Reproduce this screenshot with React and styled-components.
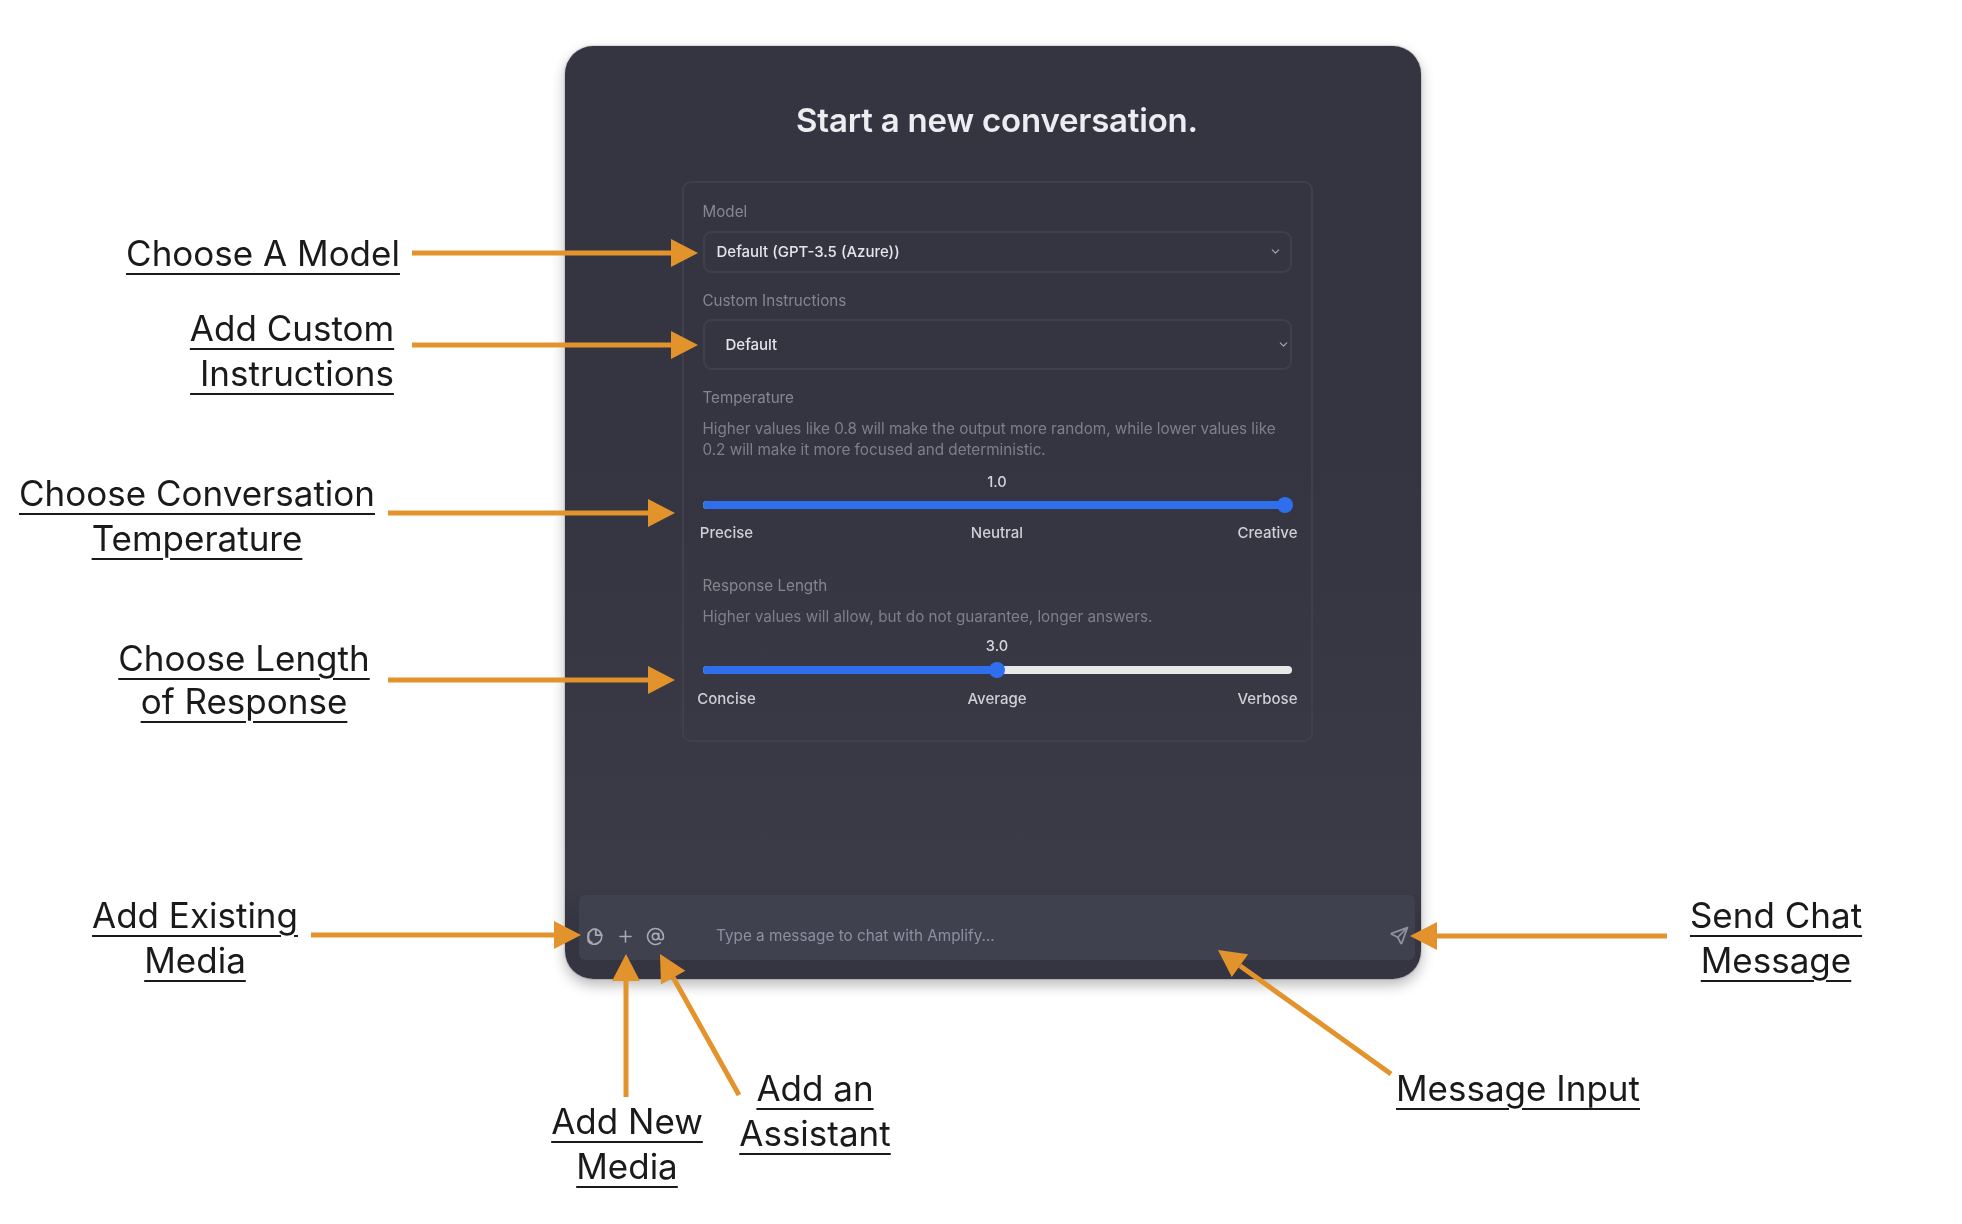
import React from "react"
import styled, { createGlobalStyle } from "styled-components"
import { Plus, AtSign, ChevronDown } from "lucide-react"
import { TbSend } from "react-icons/tb"

const GlobalStyle = createGlobalStyle`
  html, body {
    margin: 0;
    padding: 0;
    background: #fff;
  }
`

const Page = styled.div`
  position: relative;
  width: 1962px;
  height: 1224px;
  padding: 46px 0 0 565px;
  box-sizing: border-box;
  overflow: hidden;
  background: #fff;
  font-family: "Inter", sans-serif;
`

const ChatWindow = styled.div`
  display: flex;
  flex-direction: column;
  align-items: center;
  width: 856px;
  height: 933px;
  box-sizing: border-box;
  padding: 55px 6px 19px 14px;
  border-radius: 28px;
  background: linear-gradient(180deg, #343541 0%, #343541 45%, #3a3b47 90%, #343541 94%);
  box-shadow: 0 6px 14px rgba(0, 0, 0, 0.28), 0 0 2px rgba(0, 0, 0, 0.4);
  filter: blur(0.7px);
`

const Title = styled.h1`
  margin: 0 0 42px;
  font-size: 33px;
  line-height: 38px;
  font-weight: 600;
  color: #ececf1;
  letter-spacing: -0.2px;
`

const SettingsCard = styled.div`
  width: 631px;
  height: 561px;
  box-sizing: border-box;
  padding: 20px 19px 0;
  border: 2px solid #3f404c;
  border-radius: 9px;
`

const FieldLabel = styled.div`
  margin-top: ${props => props.$top || 0}px;
  font-size: 15.2px;
  line-height: 18px;
  color: #85868f;
`

const SelectBox = styled.div`
  display: flex;
  align-items: center;
  justify-content: space-between;
  height: ${props => props.$height}px;
  margin: ${props => props.$gap}px 0 19.5px;
  padding: 0 ${props => props.$padRight}px 0 ${props => props.$padLeft}px;
  box-sizing: border-box;
  border: 2px solid #3f404c;
  border-radius: 9px;
  font-size: 15px;
  font-weight: 500;
  color: #e4e4ea;

  svg {
    color: #a9aab4;
  }
`

const Help = styled.p`
  margin: 11px 0 0;
  font-size: 15.25px;
  line-height: 21px;
  letter-spacing: -0.01px;
  white-space: nowrap;
  color: #7e7f8a;
`

const SliderValue = styled.div`
  margin-top: ${props => props.$top}px;
  text-align: center;
  font-size: 14.6px;
  line-height: 18px;
  font-weight: 500;
  color: #d5d5dc;
`

const SliderTrack = styled.div`
  position: relative;
  height: 8px;
  margin-top: ${props => props.$top}px;
  border-radius: 4px;
  background: #e8e8e8;
`

const SliderFill = styled.div`
  height: 100%;
  border-radius: 4px;
  background: #2f6fed;
`

const SliderThumb = styled.div`
  position: absolute;
  top: -4px;
  width: 16px;
  height: 16px;
  margin-left: -8px;
  border-radius: 50%;
  background: #2f6fed;
`

const SliderLabels = styled.div`
  display: flex;
  justify-content: space-between;
  margin: ${props => props.$top}px -11px 0;
  font-size: 15px;
  line-height: 18px;
  font-weight: 500;
  color: #cfcfd6;

  span {
    width: 70px;
    text-align: center;
  }
`

const InputBar = styled.div`
  display: flex;
  align-items: flex-end;
  align-self: stretch;
  height: 65px;
  margin-top: auto;
  box-sizing: border-box;
  padding: 0 5px 14px 6px;
  border-radius: 6px;
  background: #40414f;
  color: #a8a9b3;
`

const IconRow = styled.div`
  display: flex;
  align-items: center;
  gap: 11px;
  width: 131px;
`

const Placeholder = styled.div`
  flex: 1;
  font-size: 15.3px;
  line-height: 20px;
  color: #8e8ea0;
`

const SendButton = styled.div`
  display: flex;
  color: #8f909c;
`

const Annotation = styled.div`
  position: absolute;
  left: ${props => props.$x}px;
  top: ${props => props.$y}px;
  transform: translateX(-50%);
  text-align: center;
  white-space: nowrap;
  font-size: 35px;
  line-height: ${props => props.$leading || 44.5}px;
  font-weight: 400;
  color: #1a1a1a;
  text-decoration: underline;
  text-decoration-thickness: 2px;
  text-underline-offset: 7px;
  filter: blur(0.5px);
`

const ArrowLayer = styled.svg`
  position: absolute;
  left: 0;
  top: 0;
  pointer-events: none;
  filter: blur(0.3px);
`

const ExistingIcon = () => (
  <svg width="20" height="20" viewBox="0 0 24 24" fill="none" stroke="currentColor" strokeWidth="2.2">
    <path d="M9 4a9 9 0 1 1 -5 14.5v-10z" />
    <path d="M13 3v8h8" />
    <path d="M5 9a7 7 0 0 0 4 11" />
  </svg>
)

const arrows = [
  [412, 253, 698, 253],
  [412, 345, 698, 345],
  [388, 513, 675, 513],
  [388, 680, 675, 680],
  [311, 935, 581, 935],
  [1667, 936, 1410, 936],
  [626, 1097, 626, 954],
  [739, 1095, 660, 954],
  [1391, 1074, 1218, 950],
]

// Shaft stops at the head's base, the head is a plain triangle
const Arrow = ({ from, to }) => {
  const [x1, y1] = from
  const [x2, y2] = to
  const len = Math.hypot(x2 - x1, y2 - y1)
  const ux = (x2 - x1) / len
  const uy = (y2 - y1) / len
  const bx = x2 - ux * 27
  const by = y2 - uy * 27
  const px = -uy * 14
  const py = ux * 14
  return (
    <g>
      <line x1={x1} y1={y1} x2={bx} y2={by} stroke="#e3932c" strokeWidth="5" />
      <polygon
        points={`${x2},${y2} ${bx + px},${by + py} ${bx - px},${by - py}`}
        fill="#e3932c"
      />
    </g>
  )
}

const App = () => (
  <Page>
    <GlobalStyle />
    <ChatWindow>
      <Title>Start a new conversation.</Title>
      <SettingsCard>
        <FieldLabel>Model</FieldLabel>
        <SelectBox $height={42} $gap={9.5} $padLeft={12} $padRight={8}>
          Default (GPT-3.5 (Azure))
          <ChevronDown size={13} />
        </SelectBox>
        <FieldLabel>Custom Instructions</FieldLabel>
        <SelectBox $height={51} $gap={8.5} $padLeft={21} $padRight={0}>
          Default
          <ChevronDown size={13} />
        </SelectBox>
        <FieldLabel>Temperature</FieldLabel>
        <Help>
          Higher values like 0.8 will make the output more random, while lower values like
          <br />
          0.2 will make it more focused and deterministic.
        </Help>
        <SliderValue $top={12.5}>1.0</SliderValue>
        <SliderTrack $top={10.5}>
          <SliderFill style={{ width: "100%" }} />
          <SliderThumb style={{ left: "98.9%" }} />
        </SliderTrack>
        <SliderLabels $top={15}>
          <span>Precise</span>
          <span>Neutral</span>
          <span>Creative</span>
        </SliderLabels>
        <FieldLabel $top={34.75}>Response Length</FieldLabel>
        <Help>Higher values will allow, but do not guarantee, longer answers.</Help>
        <SliderValue $top={10}>3.0</SliderValue>
        <SliderTrack $top={11.5}>
          <SliderFill style={{ width: "50%" }} />
          <SliderThumb style={{ left: "50%" }} />
        </SliderTrack>
        <SliderLabels $top={16}>
          <span>Concise</span>
          <span>Average</span>
          <span>Verbose</span>
        </SliderLabels>
      </SettingsCard>
      <InputBar>
        <IconRow>
          <ExistingIcon />
          <Plus size={19} />
          <AtSign size={19} />
        </IconRow>
        <Placeholder>Type a message to chat with Amplify...</Placeholder>
        <SendButton>
          <TbSend size={21} />
        </SendButton>
      </InputBar>
    </ChatWindow>

    <ArrowLayer width="1962" height="1224">
      {arrows.map(([x1, y1, x2, y2]) => (
        <Arrow key={`${x1}-${y1}`} from={[x1, y1]} to={[x2, y2]} />
      ))}
    </ArrowLayer>

    <Annotation $x={263} $y={231}>Choose A Model</Annotation>
    <Annotation $x={292} $y={306}>Add Custom<br />&nbsp;Instructions</Annotation>
    <Annotation $x={197} $y={471}>Choose Conversation<br />Temperature</Annotation>
    <Annotation $x={244} $y={637} $leading={42.5}>Choose Length<br />of Response</Annotation>
    <Annotation $x={195} $y={893}>Add Existing<br />Media</Annotation>
    <Annotation $x={627} $y={1099}>Add New<br />Media</Annotation>
    <Annotation $x={815} $y={1066}>Add an<br />Assistant</Annotation>
    <Annotation $x={1518} $y={1066}>Message Input</Annotation>
    <Annotation $x={1776} $y={893}>Send Chat<br />Message</Annotation>
  </Page>
)

export default App
